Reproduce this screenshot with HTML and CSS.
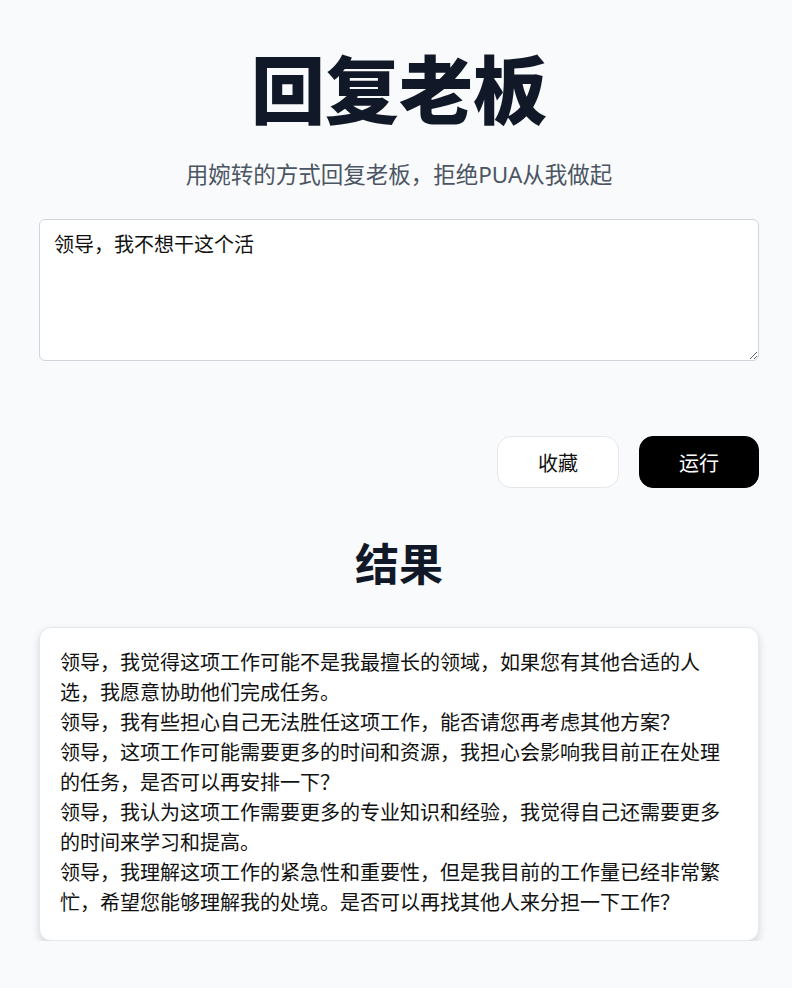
FILE: index.html
```html
<!DOCTYPE html>
<html lang="zh-CN">
<head>
<meta charset="utf-8">
<title>回复老板</title>
<link rel="stylesheet" href="styles.css">
</head>
<body>
<main class="page">
  <h1 class="title">回复老板</h1>
  <p class="subtitle">用婉转的方式回复老板，拒绝PUA从我做起</p>
  <textarea class="prompt">领导，我不想干这个活</textarea>
  <div class="actions">
    <button class="btn btn-light">收藏</button>
    <button class="btn btn-dark">运行</button>
  </div>
  <h2 class="result-title">结果</h2>
  <div class="result-card">
    <p>领导，我觉得这项工作可能不是我最擅长的领域，如果您有其他合适的人选，我愿意协助他们完成任务。</p>
    <p>领导，我有些担心自己无法胜任这项工作，能否请您再考虑其他方案？</p>
    <p>领导，这项工作可能需要更多的时间和资源，我担心会影响我目前正在处理的任务，是否可以再安排一下？</p>
    <p>领导，我认为这项工作需要更多的专业知识和经验，我觉得自己还需要更多的时间来学习和提高。</p>
    <p>领导，我理解这项工作的紧急性和重要性，但是我目前的工作量已经非常繁忙，希望您能够理解我的处境。是否可以再找其他人来分担一下工作？</p>
  </div>
</main>
</body>
</html>
```

FILE: styles.css
```css
* { box-sizing: border-box; }
html, body {
  margin: 0;
  background: #f9fafb;
}
body {
  font-family: "Noto Sans", "Noto Sans CJK SC", sans-serif;
  color: #111827;
}
.page {
  width: 720px;
  margin-left: 39px;
  padding-top: 53px;
  display: flex;
  flex-direction: column;
}
.title {
  margin: 0;
  text-align: center;
  font-size: 74px;
  line-height: 74px;
  font-weight: 800;
  color: #111827;
}
.subtitle {
  margin: 33px 0 0;
  text-align: center;
  font-size: 22.5px;
  line-height: 30px;
  color: #4b5563;
}
.prompt {
  margin-top: 29px;
  width: 720px;
  height: 142px;
  padding: 11px 14px;
  border: 1px solid #d1d5db;
  border-radius: 6px;
  background: #fff;
  font-family: inherit;
  font-size: 20px;
  line-height: 28px;
  color: #111;
  resize: vertical;
  display: block;
}
.actions {
  margin-top: 75px;
  display: flex;
  justify-content: flex-end;
  gap: 20px;
}
.btn {
  height: 52px;
  border-radius: 14px;
  font-family: inherit;
  font-size: 20px;
  cursor: pointer;
}
.btn-light {
  width: 122px;
  background: #fff;
  border: 1px solid #e5e7eb;
  color: #111;
}
.btn-dark {
  width: 120px;
  background: #000;
  border: 1px solid #000;
  color: #fff;
}
.result-title {
  margin: 50px 0 0;
  text-align: center;
  font-size: 44px;
  line-height: 53px;
  font-weight: 700;
  color: #111827;
}
.result-card {
  margin-top: 36px;
  background: #fff;
  border: 1px solid #e5e7eb;
  border-radius: 12px;
  box-shadow: 0 4px 8px rgba(0, 0, 0, 0.14);
  padding: 20px 24px 22px 20px;
  font-size: 20px;
  line-height: 30px;
  color: #111;
}
.result-card p {
  margin: 0;
}
```
